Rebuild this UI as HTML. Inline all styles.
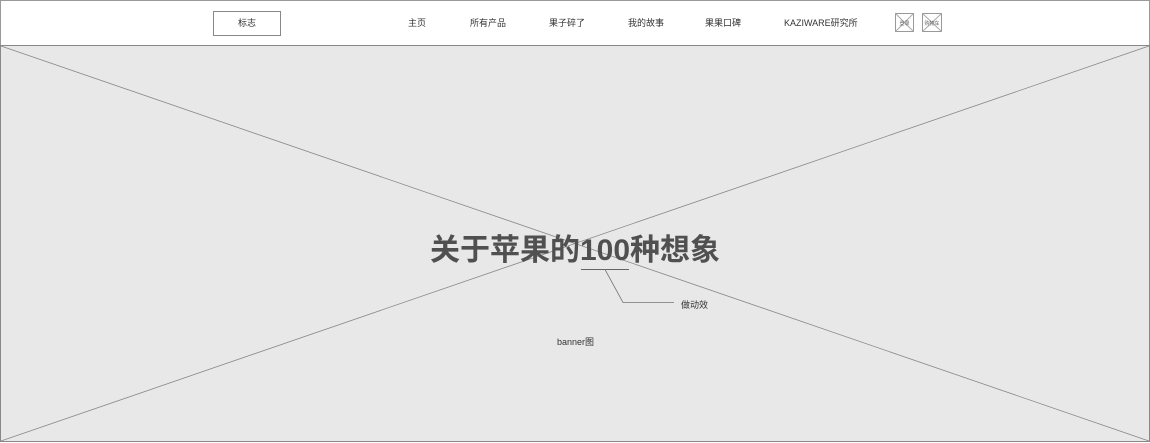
<!DOCTYPE html>
<html><head><meta charset="utf-8"><style>
body{margin:0;width:1150px;height:443px;background:#fff;font-family:"Liberation Sans","Noto Sans CJK SC",sans-serif;position:relative;overflow:hidden}
.hdr{position:absolute;left:0;top:0;width:1148px;height:45px;border:1px solid #999;border-bottom:none;background:#fff}
.nav{position:absolute;top:16px;font-size:9px;color:#333;white-space:nowrap}
.logo{position:absolute;left:213px;top:11px;width:66px;height:23px;border:1px solid #888;font-size:9px;color:#333;text-align:center;line-height:23px}
.ban{position:absolute;left:0;top:45px;width:1148px;height:395px;border:1px solid #888;background:#e8e8e8}
svg{position:absolute;left:0;top:0}
.title{position:absolute;left:0;width:1150px;top:225px;text-align:center;font-size:30px;font-weight:bold;color:#505050;letter-spacing:0px}
.small{position:absolute;font-size:9px;color:#333}
</style></head><body>
<div class="hdr"></div>
<div class="logo">标志</div>
<div class="nav" style="left:408px">主页</div>
<div class="nav" style="left:470px">所有产品</div>
<div class="nav" style="left:549px">果子碎了</div>
<div class="nav" style="left:628px">我的故事</div>
<div class="nav" style="left:705px">果果口碑</div>
<div class="nav" style="left:784px">KAZIWARE研究所</div>
<div class="ban"></div>
<svg width="1150" height="443">
<line x1="1" y1="46" x2="1149" y2="441" stroke="#888" stroke-width="0.8"/>
<line x1="1149" y1="46" x2="1" y2="441" stroke="#888" stroke-width="0.8"/>
<rect x="895.5" y="13.5" width="18" height="18" fill="#fff" stroke="#999"/>
<line x1="895.5" y1="13.5" x2="913.5" y2="31.5" stroke="#aaa"/><line x1="913.5" y1="13.5" x2="895.5" y2="31.5" stroke="#aaa"/>
<rect x="922.5" y="13.5" width="19" height="18" fill="#fff" stroke="#999"/>
<line x1="922.5" y1="13.5" x2="941.5" y2="31.5" stroke="#aaa"/><line x1="941.5" y1="13.5" x2="922.5" y2="31.5" stroke="#aaa"/>
<text x="904.5" y="25" font-size="5" text-anchor="middle" fill="#666" font-family="Noto Sans CJK SC">登录</text>
<text x="932" y="25" font-size="5" text-anchor="middle" fill="#666" font-family="Noto Sans CJK SC">购物车</text>
<line x1="581" y1="269.5" x2="629" y2="269.5" stroke="#666"/>
<polyline points="605,269.5 623,302.5 674,302.5" fill="none" stroke="#777" stroke-width="0.8"/>
</svg>
<div class="title">关于苹果的100种想象</div>
<div class="small" style="left:681px;top:298px">做动效</div>
<div class="small" style="left:557px;top:335px">banner图</div>
</body></html>
